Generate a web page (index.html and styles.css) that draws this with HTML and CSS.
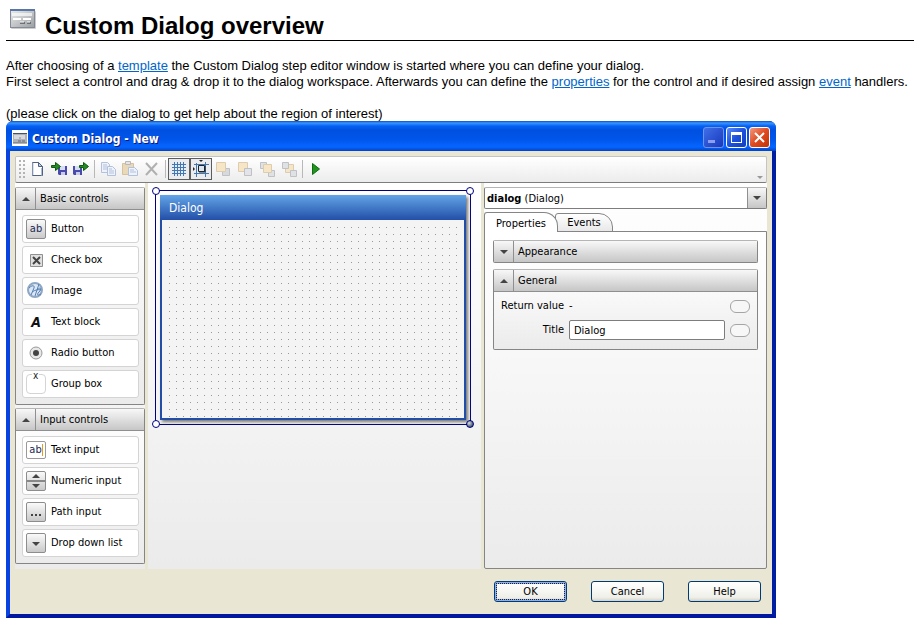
FILE: index.html
```html
<!DOCTYPE html>
<html lang="en">
<head>
<meta charset="utf-8">
<title>Custom Dialog overview</title>
<link rel="stylesheet" href="styles.css">
</head>
<body>
<header class="page-head">
  <svg class="page-icon" width="27" height="21" viewBox="0 0 27 21" aria-hidden="true">
    <defs><linearGradient id="pi" x1="0" y1="0" x2="1" y2="1"><stop offset="0" stop-color="#eceded"/><stop offset="1" stop-color="#9b9ea3"/></linearGradient></defs>
    <rect x="1" y="2" width="25" height="18" rx="1" fill="#ccc"/>
    <rect x="0.500" y="0.500" width="24" height="18" fill="url(#pi)" stroke="#858b96"/>
    <path d="M0 0h25v2H0z" fill="#5a76a8"/>
    <path d="M2 4h20v3H2z" fill="#fff" opacity=".65"/>
    <path d="M3 10h8M13 10h8" stroke="#fff" stroke-width="2"/>
    <path d="M10 14h5M17 14h4" stroke="#6c7077" stroke-width="2"/>
    <path d="M10 13h4M17 13h3" stroke="#fff"/>
  </svg>
  <h1>Custom Dialog overview</h1>
</header>
<p class="intro">After choosing of a <a href="#template">template</a> the Custom Dialog step editor window is started where you can define your dialog.<br>
First select a control and drag &amp; drop it to the dialog workspace. Afterwards you can define the <a href="#properties">properties</a> for the control and if desired assign <a href="#event">event</a> handlers.</p>
<p class="hint">(please click on the dialog to get help about the region of interest)</p>

<main class="window">
  <div class="titlebar">
    <svg width="16" height="16" viewBox="0 0 16 16" aria-hidden="true"><path d="M0 0h16v16H0z" fill="#fff"/><path d="M1 3h14v10H1z" fill="#aeb3ba"/><path d="M1 3h14v1H1z" fill="#456"/><path d="M2 6h11M2 8h5M9 8h4" stroke="#fff"/><path d="M6 11h3M10 11h3M1 13h14" stroke="#626870"/></svg>
    <h2>Custom Dialog - New</h2>
    <div class="caption-buttons">
      <button class="cap min" aria-label="Minimize"><svg width="19" height="19" viewBox="0 0 19 19"><path d="M4 12h7v3H4z" fill="#8c9fee"/></svg></button>
      <button class="cap max" aria-label="Maximize"><svg width="19" height="19" viewBox="0 0 19 19"><path d="M4 4h11v11H4zM5 7v7h9V7z" fill="#fff" fill-rule="evenodd"/></svg></button>
      <button class="cap close" aria-label="Close"><svg width="19" height="19" viewBox="0 0 19 19"><path d="M5 5l9 9M14 5l-9 9" stroke="#fff" stroke-width="2"/></svg></button>
    </div>
  </div>
  <div class="client">
    <div class="toolbar">
      <svg class="grip" width="6" height="19" viewBox="0 0 6 19" aria-hidden="true"><path d="M0 1h2M4 1h2M0 5h2M4 5h2M0 9h2M4 9h2M0 13h2M4 13h2M0 17h2M4 17h2" stroke="#b3b3b3" stroke-width="2"/></svg>
      <button class="tool" aria-label="New"><svg width="18" height="18" viewBox="0 0 18 18"><path d="M4.500 2.500h6l4 4v9h-10z" fill="#fff" stroke="#51617e"/><path d="M5 15V3" stroke="#b8c4da"/><path d="M10.500 2.500v4h4z" fill="#b8d0f4" stroke="#51617e"/><path d="M13.500 8v7.500" stroke="#a9bddf"/></svg></button>
      <button class="tool" aria-label="Load"><svg width="18" height="18" viewBox="0 0 18 18"><path d="M8 6h9v9H9l-1-1z" fill="#4a4aae"/><path d="M10 6h5v4h-5z" fill="#d6dcf2"/><path d="M11 12h4v3h-4z" fill="#c9cce6"/><path d="M1.500 5.500h4v-3l5 4-5 4v-3h-4z" fill="#258a25" stroke="#0b5c0b"/></svg></button>
      <button class="tool" aria-label="Save"><svg width="18" height="18" viewBox="0 0 18 18"><path d="M1 6h9v9H2l-1-1z" fill="#4a4aae"/><path d="M3 6h5v4H3z" fill="#d6dcf2"/><path d="M4 12h4v3H4z" fill="#c9cce6"/><path d="M7.500 5.500h4v-3l5 4-5 4v-3h-4z" fill="#258a25" stroke="#0b5c0b"/></svg></button>
      <span class="sep"></span>
      <button class="tool" aria-label="Copy" disabled><svg width="18" height="18" viewBox="0 0 18 18"><g fill="#eef2fa" stroke="#b2c1dc"><path d="M2.500 2.500h6l2 2v8h-8z"/><path d="M4 5h4M4 7h4M4 9h4"/><path d="M8.500 6.500h5l3 3v6h-8z"/><path d="M10 9h3M10 11h5M10 13h5"/></g></svg></button>
      <button class="tool" aria-label="Paste" disabled><svg width="18" height="18" viewBox="0 0 18 18"><path d="M1.500 3.500h11v11h-11z" fill="#ead9b8" stroke="#d6c29d"/><path d="M4.500 1.500h5v3h-5z" fill="#e5e5e5" stroke="#b8b8b8"/><path d="M7.500 7.500h6l3 3v5h-9z" fill="#eef2fa" stroke="#b2c1dc"/><path d="M9 10h4M9 12h6" stroke="#b2c1dc"/></svg></button>
      <button class="tool" aria-label="Delete" disabled><svg width="18" height="18" viewBox="0 0 18 18"><path d="M3 3l11 12M14 3L3 15" stroke="#b0b0b0" stroke-width="2"/></svg></button>
      <span class="sep"></span>
      <button class="tool toggled" aria-label="Show grid" aria-pressed="true"><svg width="18" height="18" viewBox="0 0 18 18"><path d="M4.500 2v14M7.500 2v14M10.500 2v14M13.500 2v14M2 4.500h14M2 7.500h14M2 10.500h14M2 13.500h14" stroke="#4277b5"/></svg></button>
      <button class="tool toggled" aria-label="Snap to grid" aria-pressed="true"><svg width="18" height="18" viewBox="0 0 18 18"><path d="M4.500 3v14M13.500 2v15M2 4.500h15M2 13.500h15" stroke="#4277b5"/><path d="M6.500 5.500h6v6h-6z" fill="#dce4ee" stroke="#222"/><path d="M7 12h6V6" fill="none" stroke="#222"/><path d="M7 0h4L9 2zM1 7v4l2-2z" fill="#222"/></svg></button>
      <button class="tool" aria-label="Bring to front" disabled><svg width="18" height="18" viewBox="0 0 18 18"><path d="M8.500 8.500h7v7h-7z" fill="#d6d9dd" stroke="#bfc1c4"/><path d="M2.500 2.500h9v9h-9z" fill="#f7e6c6" stroke="#dccdb0"/></svg></button>
      <button class="tool" aria-label="Send to back" disabled><svg width="18" height="18" viewBox="0 0 18 18"><path d="M2.500 2.500h9v9h-9z" fill="#f7e6c6" stroke="#dccdb0"/><path d="M8.500 8.500h7v7h-7z" fill="#e2e4e7" stroke="#bfc1c4"/></svg></button>
      <button class="tool" aria-label="Bring forward" disabled><svg width="18" height="18" viewBox="0 0 18 18"><path d="M2.500 2.500h6v6h-6zM10.500 10.500h6v6h-6z" fill="#dfe2e5" stroke="#bfc1c4"/><path d="M5.500 4.500h8v8h-8z" fill="#f7e6c6" stroke="#dccdb0"/></svg></button>
      <button class="tool" aria-label="Send backward" disabled><svg width="18" height="18" viewBox="0 0 18 18"><path d="M5.500 4.500h8v8h-8z" fill="#f7e6c6" stroke="#dccdb0"/><path d="M2.500 2.500h6v6h-6zM10.500 10.500h6v6h-6z" fill="#dfe2e5" stroke="#bfc1c4"/></svg></button>
      <span class="sep"></span>
      <button class="tool" aria-label="Run"><svg width="18" height="18" viewBox="0 0 18 18"><path d="M5.500 3.500v11l7-5.500z" fill="#20941f" stroke="#116b12"/></svg></button>
      <svg class="overflow" width="6" height="4" viewBox="0 0 6 4" aria-hidden="true"><path d="M0 0h6L3 3z" fill="#999"/></svg>
    </div>

    <div class="workspace">
      <aside class="palette">
        <section class="group">
          <button class="group-head"><span class="arrow"><svg width="8" height="4" viewBox="0 0 8 4"><path d="M0 4h8L4 0z" fill="#444"/></svg></span><span class="group-name">Basic controls</span></button>
          <ul class="items">
            <li><span class="glyph face ab">ab</span>Button</li>
            <li><span class="glyph"><svg width="20" height="20" viewBox="0 0 20 20"><path d="M4.500 4.500h12v12h-12z" fill="#e0e0e0" stroke="#909090"/><path d="M7 7l7 7M14 7l-7 7" stroke="#444" stroke-width="2"/></svg></span>Check box</li>
            <li><span class="glyph"><svg width="20" height="20" viewBox="0 0 20 20"><circle cx="9" cy="9" r="7" fill="#dbe7f5" stroke="#8fa6c4" stroke-width="2"/><path d="M3 7c3-3 6-3 5 0l-3 7M13 3L9 15M6 11c3-2 6-3 9-2M11 9c4-4 5-1 2 2s-1 4 2 2" fill="none" stroke="#5680b5"/></svg></span>Image</li>
            <li><span class="glyph letter">A</span>Text block</li>
            <li><span class="glyph"><svg width="20" height="20" viewBox="0 0 20 20"><circle cx="10" cy="10" r="6" fill="#e8e8e8" stroke="#999"/><circle cx="10" cy="10" r="3" fill="#444"/></svg></span>Radio button</li>
            <li><span class="glyph frame"><span class="frame-label">x</span></span>Group box</li>
          </ul>
        </section>
        <section class="group">
          <button class="group-head"><span class="arrow"><svg width="8" height="4" viewBox="0 0 8 4"><path d="M0 4h8L4 0z" fill="#444"/></svg></span><span class="group-name">Input controls</span></button>
          <ul class="items">
            <li><span class="glyph field ab">ab<span class="caret"></span></span>Text input</li>
            <li><span class="glyph face"><svg width="18" height="18" viewBox="0 0 18 18"><path d="M0 9h18" stroke="#888" stroke-width="2"/><path d="M5 6h8L9 2zM5 12h8l-4 4z" fill="#444"/></svg></span>Numeric input</li>
            <li><span class="glyph face"><svg width="18" height="18" viewBox="0 0 18 18"><path d="M4 11h2v2H4zM8 11h2v2H8zM12 11h2v2h-2z" fill="#444"/></svg></span>Path input</li>
            <li><span class="glyph face"><svg width="18" height="18" viewBox="0 0 18 18"><path d="M5 8h8l-4 4z" fill="#444"/></svg></span>Drop down list</li>
          </ul>
        </section>
      </aside>

      <section class="canvas">
        <div class="selection">
          <div class="form">
            <h3>Dialog</h3>
            <div class="dots">
              <svg width="100%" height="100%" aria-hidden="true">
                <defs><pattern id="grid" width="7" height="7" patternUnits="userSpaceOnUse"><rect width="1" height="1" fill="#999"/></pattern></defs>
                <rect width="100%" height="100%" fill="url(#grid)"/>
              </svg>
            </div>
          </div>
          <i class="handle nw"></i><i class="handle ne"></i><i class="handle sw"></i><i class="handle se"></i>
        </div>
      </section>

      <aside class="inspector">
        <button class="picker" aria-haspopup="listbox"><span class="picker-value"><b>dialog</b> (Dialog)</span><span class="picker-arrow"><svg width="8" height="4" viewBox="0 0 8 4"><path d="M0 0h8L4 4z" fill="#444"/></svg></span></button>
        <div class="tabs" role="tablist">
          <button class="tab active" role="tab" aria-selected="true">Properties</button>
          <button class="tab" role="tab" aria-selected="false">Events</button>
        </div>
        <div class="tab-panel" role="tabpanel">
          <section class="group">
            <button class="group-head"><span class="arrow"><svg width="8" height="4" viewBox="0 0 8 4"><path d="M0 0h8L4 4z" fill="#444"/></svg></span><span class="group-name">Appearance</span></button>
          </section>
          <section class="group">
            <button class="group-head"><span class="arrow"><svg width="8" height="4" viewBox="0 0 8 4"><path d="M0 4h8L4 0z" fill="#444"/></svg></span><span class="group-name">General</span></button>
            <div class="props">
              <span class="prop-name">Return value</span><output>-</output><button class="pill" aria-label="Bind return value"></button>
              <label class="prop-name" for="title">Title</label><input id="title" type="text" value="Dialog"><button class="pill" aria-label="Bind title"></button>
            </div>
          </section>
        </div>
      </aside>
    </div>

    <footer class="actions">
      <button class="action default"><span>OK</span></button>
      <button class="action"><span>Cancel</span></button>
      <button class="action"><span>Help</span></button>
    </footer>
  </div>
</main>
</body>
</html>
```

FILE: styles.css
```css
* { box-sizing: border-box; }

body {
  margin: 0;
  padding: 8px 0 7px 6px;
  background: #fff;
  color: #000;
  font: 13px/16px "Liberation Sans", Arial, sans-serif;
}

button, input {
  margin: 0;
  padding: 0;
  border: 0;
  background: none;
  color: inherit;
  font: inherit;
}

svg { display: block; }

.page-head {
  display: flex;
  gap: 8px;
  height: 33px;
  padding-left: 4px;
  border-bottom: 1px solid #000;
}

.page-icon { margin-top: 1px; }

h1 {
  margin: 0;
  padding-top: 4px;
  font-size: 24px;
  line-height: 28px;
}

p { margin: 16px 0 0; }

.intro { margin-top: 17px; white-space: nowrap; }

.intro a { color: #0066cc; }

.window {
  max-width: 770px;
  margin-top: -1px;
  border: solid #0831d9;
  border-width: 0 4px 4px;
  border-color: #0842e0 #001ea0 #0018a0 #0842e0;
  border-radius: 7px 7px 0 0;
  background: #0054e3;
  font: 11px/14px "DejaVu Sans Condensed", Tahoma, sans-serif;
}

.titlebar {
  display: flex;
  align-items: center;
  gap: 4px;
  height: 30px;
  margin: 0 -4px;
  padding: 3px 6px 0;
  border-radius: 7px 7px 0 0;
  background: linear-gradient(#0a50c8 0, #3b95ff 2px, #0562f4 5px, #0050e0 9px, #0055ea 18px, #0566ff 26px, #0042c8 30px);
  color: #fff;
}

.titlebar h2 {
  flex: 1;
  margin: 0;
  padding-top: 2px;
  font: bold 12px/16px "DejaVu Sans Condensed", Tahoma, sans-serif;
  text-shadow: 1px 1px #0a1883;
}

.caption-buttons { display: flex; gap: 2px; }

.cap {
  width: 21px;
  height: 21px;
  border: 1px solid #fff;
  border-radius: 3px;
  background: linear-gradient(135deg, #5a8cf8, #1c50dc 50%, #1040c0);
}

.cap.min { border-color: #6e92ee; background: linear-gradient(135deg, #3f6fe8, #1838bc); }

.cap.close { background: linear-gradient(135deg, #f09a80, #e04a20 50%, #c03408); }

.client {
  padding: 5px 5px 12px;
  background: #e9e6d3;
}

.toolbar {
  display: flex;
  align-items: center;
  height: 27px;
  padding: 0 3px 1px;
  border: solid #c4c4c4;
  border-width: 1px;
  border-bottom-color: #7d7d7d;
  border-radius: 2px;
  background: linear-gradient(#fff, #ececec);
}

.grip { margin-right: 1px; }

.tool {
  display: grid;
  place-items: center;
  width: 22px;
  height: 22px;
}

.tool.toggled { border: 1px solid #5c5c5c; background: #e9ebee; }

.sep {
  width: 1px;
  height: 18px;
  margin: 0 2px;
  background: #b8b8b8;
}

.overflow { align-self: flex-end; margin: 0 0 1px auto; }

.workspace {
  display: grid;
  grid-template-columns: 130px 1fr 283px;
  gap: 3px;
}

.palette, .canvas, .inspector { background: linear-gradient(#fff, #ebebeb); }

.palette {
  display: flex;
  flex-direction: column;
  gap: 3px;
  padding: 4px 0 5px;
}

.group {
  border: 1px solid #858585;
  border-top-color: #b5b5b5;
  border-radius: 2px;
  background: linear-gradient(#fff, #ebebeb);
}

.group-head {
  display: flex;
  align-items: stretch;
  width: 100%;
  height: 21px;
  background: linear-gradient(#f8f8f8, #c6c6c6);
  text-align: left;
}

.arrow {
  display: grid;
  place-items: center;
  width: 20px;
  border-right: 1px solid #8f8f8f;
}

.group-name { padding: 4px 4px 3px; }

.items {
  display: grid;
  gap: 3px;
  margin: 0;
  padding: 5px 5px 6px 6px;
  border-top: 1px solid #8f8f8f;
  list-style: none;
}

.items li {
  display: flex;
  align-items: center;
  gap: 5px;
  height: 28px;
  padding-left: 3px;
  border: 1px solid #d4d4d4;
  border-radius: 3px;
  background: #fff;
  line-height: 16px;
}

.glyph {
  display: grid;
  place-items: center;
  width: 20px;
  height: 20px;
  color: #222a55;
}

.face {
  border: 1px solid #8d8d8d;
  border-radius: 2px;
  background: linear-gradient(#fafafa, #c9c9c9);
}

.field {
  display: flex;
  justify-content: center;
  height: 18px;
  border: 1px solid #999;
  border-radius: 2px;
  background: #fff;
}

.caret { width: 1px; height: 12px; background: #e59a20; }

.letter { color: #111; font-size: 14px; font-weight: bold; font-style: italic; }

.frame {
  position: relative;
  border: 1px solid #d4d4d4;
  border-radius: 4px;
}

.frame-label {
  position: absolute;
  top: -4px;
  left: 5px;
  padding: 0 1px;
  background: #fff;
  color: #222;
  font-size: 10px;
  line-height: 10px;
}

.canvas { padding: 7px 10px 0 7px; }

.selection {
  position: relative;
  padding: 4px;
  border: 1px solid #000080;
}

.form {
  border: 2px solid #234ea8;
  border-top: 0;
  box-shadow: 2px 2px 3px #777;
}

.form h3 {
  margin: 0 -2px;
  padding: 5px 9px 3px;
  height: 25px;
  background: linear-gradient(#62a5e6, #234ea8);
  color: #fff;
  font: 12px/17px "DejaVu Sans Condensed", Tahoma, sans-serif;
}

.dots {
  height: 198px;
  padding: 7px 6px 1px 7px;
  background: #f4f4f4;
}

.handle {
  position: absolute;
  width: 8px;
  height: 8px;
  border: 1px solid #000080;
  border-radius: 50%;
  background: #fff;
}

.nw { top: -4px; left: -4px; }
.ne { top: -4px; right: -4px; }
.sw { bottom: -4px; left: -4px; }
.se { bottom: -4px; right: -4px; background: radial-gradient(circle at 35% 35%, #d8e0e0, #354860 80%); }

.inspector {
  display: flex;
  flex-direction: column;
  padding-top: 4px;
}

.picker {
  display: flex;
  height: 22px;
  border: 1px solid #7d7d7d;
  border-top-color: #b5b5b5;
  border-radius: 2px;
  background: #fff;
  text-align: left;
}

.picker-value { flex: 1; padding: 4px 2px 2px; }

.picker-arrow {
  display: grid;
  place-items: center;
  align-self: stretch;
  width: 19px;
  border-left: 1px solid #8f8f8f;
  background: linear-gradient(#f8f8f8, #c6c6c6);
}

.tabs {
  display: flex;
  align-items: flex-end;
  margin: 3px 0 -1px;
}

.tab {
  width: 58px;
  height: 19px;
  margin-left: -3px;
  border: 1px solid #858585;
  border-radius: 3px 14px 0 0;
  background: linear-gradient(#fff, #e8e8e8);
}

.tab.active {
  z-index: 1;
  width: 74px;
  height: 20px;
  margin-left: 0;
  padding-top: 2px;
  border-bottom: 0;
  background: #fff;
}

.tab-panel {
  display: flex;
  flex: 1;
  flex-direction: column;
  gap: 6px;
  padding: 8px;
  border: 1px solid #858585;
  border-radius: 0 0 2px 2px;
  background: linear-gradient(#fff, #ebebeb);
}

.props {
  display: grid;
  grid-template-columns: 70px 1fr 20px;
  align-items: center;
  gap: 7px 5px;
  padding: 7px 7px 9px 0;
  border-top: 1px solid #8f8f8f;
}

.prop-name { text-align: right; }

.props input {
  width: 100%;
  height: 20px;
  padding: 0 4px;
  border: 1px solid #7d7d7d;
  border-radius: 2px;
  background: #fff;
}

.pill {
  width: 20px;
  height: 13px;
  border: 1px solid #a5a5a5;
  border-radius: 6px;
  background: #f7f7f7;
}

.actions {
  display: flex;
  justify-content: flex-end;
  gap: 24px;
  padding: 12px 6px 0 0;
}

.action {
  width: 73px;
  height: 21px;
  padding: 1px;
  border: 1px solid #003c74;
  border-radius: 3px;
  background: linear-gradient(#fff, #f0f0ea 80%, #d8d2c6);
}

.action.default { box-shadow: inset 0 0 0 2px #8eaef0; }

.action.default span { display: block; border: 1px dotted #222; line-height: 15px; }
```
